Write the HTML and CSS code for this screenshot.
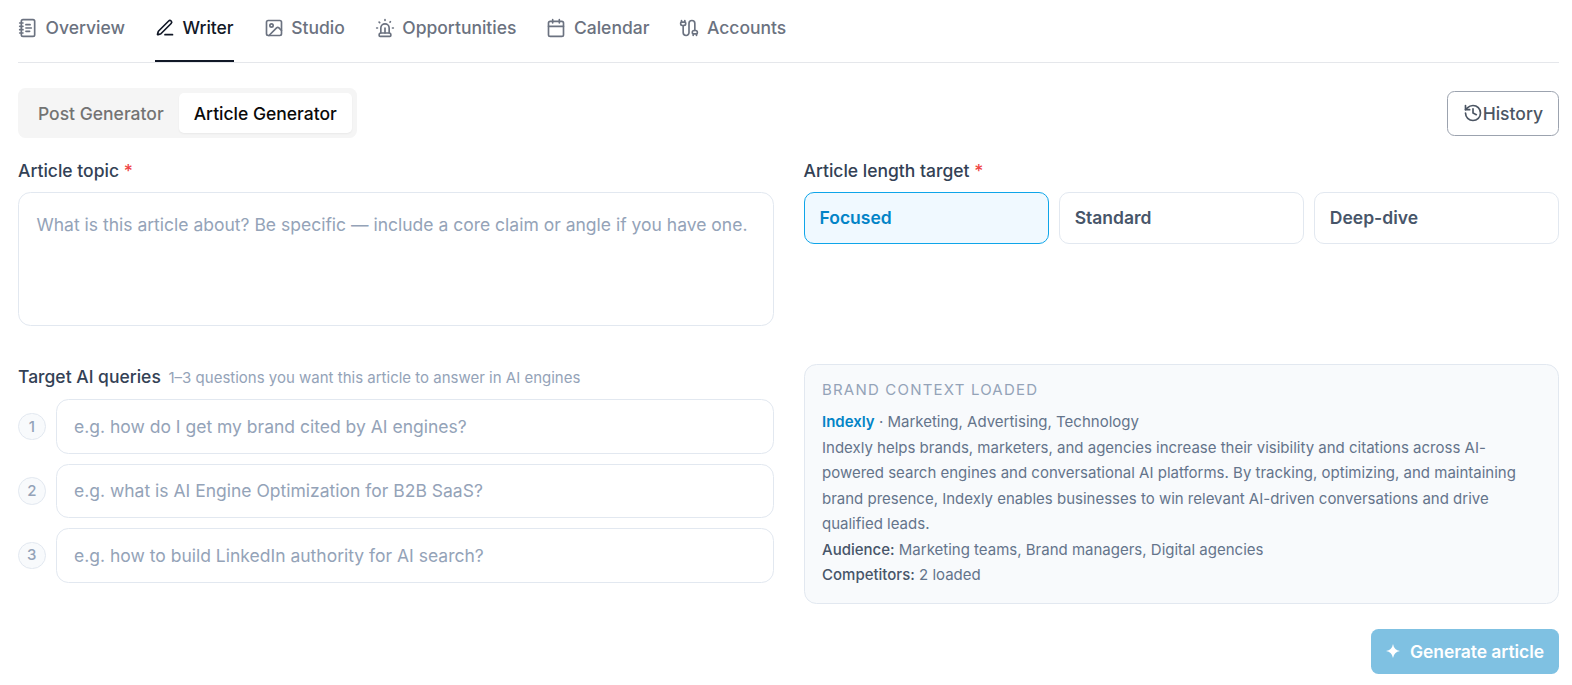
FILE: index.html
```html
<!DOCTYPE html>
<html lang="en">

<head>
    <meta charset="UTF-8">
    <title>Article Generator</title>
    <link rel="stylesheet" href="styles.css">
</head>

<body>
    <!-- Main navigation -->
    <nav class="nav">
        <a class="nav-item">
            <svg class="icon" viewBox="0 0 24 24"><path d="M2 6h4M2 10h4M2 14h4M2 18h4"/><rect width="16" height="20" x="4" y="2" rx="2"/><path d="M9.5 8h5M9.5 12H16M9.5 16H14"/></svg>
            Overview
        </a>
        <a class="nav-item active">
            <svg class="icon" viewBox="0 0 24 24"><path d="M12 20h9"/><path d="M16.376 3.622a1 1 0 0 1 3.002 3.002L7.368 18.635a2 2 0 0 1-.855.506l-2.872.838a.5.5 0 0 1-.62-.62l.838-2.872a2 2 0 0 1 .506-.854z"/></svg>
            Writer
        </a>
        <a class="nav-item">
            <svg class="icon" viewBox="0 0 24 24"><rect width="18" height="18" x="3" y="3" rx="2"/><circle cx="9" cy="9" r="2"/><path d="m21 15-3.086-3.086a2 2 0 0 0-2.828 0L6 21"/></svg>
            Studio
        </a>
        <a class="nav-item">
            <svg class="icon" viewBox="0 0 24 24"><path d="M7 18v-6a5 5 0 1 1 10 0v6"/><path d="M5 21a1 1 0 0 0 1 1h12a1 1 0 0 0 1-1v-1a2 2 0 0 0-2-2H7a2 2 0 0 0-2 2z"/><path d="M21 12h1M18.5 4.5 18 5M2 12h1M12 2v1M4.929 4.929l.707.707M12 12v6"/></svg>
            Opportunities
        </a>
        <a class="nav-item">
            <svg class="icon" viewBox="0 0 24 24"><path d="M8 2v4M16 2v4"/><rect width="18" height="18" x="3" y="4" rx="2"/><path d="M3 10h18"/></svg>
            Calendar
        </a>
        <a class="nav-item">
            <svg class="icon" viewBox="0 0 24 24"><path d="M17 21v-2a1 1 0 0 1-1-1v-1a2 2 0 0 1 2-2h2a2 2 0 0 1 2 2v1a1 1 0 0 1-1 1"/><path d="M19 15V6.5a1 1 0 0 0-7 0v11a1 1 0 0 1-7 0V9"/><path d="M21 21v-2h-4M3 5h4V3"/><path d="M7 5a1 1 0 0 1 1 1v1a2 2 0 0 1-2 2H4a2 2 0 0 1-2-2V6a1 1 0 0 1 1-1V3"/></svg>
            Accounts
        </a>
    </nav>

    <!-- Generator switch and history -->
    <div class="toolbar">
        <div class="switch">
            <button class="switch-button">Post Generator</button>
            <button class="switch-button selected">Article Generator</button>
        </div>
        <button class="history-button">
            <svg class="icon" viewBox="0 0 24 24"><path d="M3 12a9 9 0 1 0 9-9 9.75 9.75 0 0 0-6.74 2.74L3 8"/><path d="M3 3v5h5"/><path d="M12 7v5l4 2"/></svg><span class="button-text">History</span>
        </button>
    </div>

    <!-- Article form -->
    <form class="article-form">
        <div class="topic">
            <label class="label" for="topic">Article topic <span class="required">*</span></label>
            <textarea class="field topic-field" id="topic" placeholder="What is this article about? Be specific — include a core claim or angle if you have one."></textarea>
        </div>

        <div class="length">
            <div class="label">Article length target <span class="required">*</span></div>
            <div class="length-options">
                <button type="button" class="option chosen">Focused</button>
                <button type="button" class="option">Standard</button>
                <button type="button" class="option">Deep-dive</button>
            </div>
        </div>

        <div class="queries">
            <div class="label">Target AI queries <span class="hint">1–3 questions you want this article to answer in AI engines</span></div>
            <div class="query-list">
                <div class="query">
                    <span class="number">1</span>
                    <input type="text" class="field" placeholder="e.g. how do I get my brand cited by AI engines?">
                </div>
                <div class="query">
                    <span class="number">2</span>
                    <input type="text" class="field" placeholder="e.g. what is AI Engine Optimization for B2B SaaS?">
                </div>
                <div class="query">
                    <span class="number">3</span>
                    <input type="text" class="field" placeholder="e.g. how to build LinkedIn authority for AI search?">
                </div>
            </div>
        </div>

        <div class="brand">
            <div class="brand-title">Brand context loaded</div>
            <div><span class="brand-name">Indexly</span> · Marketing, Advertising, Technology</div>
            <div>Indexly helps brands, marketers, and agencies increase their visibility and citations across AI-powered search engines and conversational AI platforms. By tracking, optimizing, and maintaining brand presence, Indexly enables businesses to win relevant AI-driven conversations and drive qualified leads.</div>
            <div><span class="brand-key">Audience:</span> Marketing teams, Brand managers, Digital agencies</div>
            <div><span class="brand-key">Competitors:</span> 2 loaded</div>
        </div>
    </form>

    <div class="actions">
        <button class="generate-button" disabled>
            <svg class="spark" viewBox="0 0 14 14"><path d="M7 0Q8 6 14 7Q8 8 7 14Q6 8 0 7Q6 6 7 0z"/></svg>
            <span class="button-text">Generate article</span>
        </button>
    </div>
</body>

</html>
```
FILE: styles.css
```css
/* General styles */
* {
    box-sizing: border-box;
}

body {
    margin: 0;
    padding: 0 13px 0 18px;
    background-color: #fff;
    color: #334155;
    font-family: Inter, sans-serif;
    font-size: 17.5px;
    line-height: 26px;
}

button,
input,
textarea {
    font: inherit;
}

.icon {
    width: 20px;
    height: 20px;
    flex-shrink: 0;
    fill: none;
    stroke: currentColor;
    stroke-width: 2;
    stroke-linecap: round;
    stroke-linejoin: round;
}

.button-text {
    padding-top: 2px;
}

/* Navigation */
.nav {
    display: flex;
    gap: 30px;
    border-bottom: 1px solid #e5e7eb;
}

.nav-item {
    display: flex;
    align-items: center;
    gap: 7.5px;
    padding: 15px 0 19px;
    border-bottom: 2px solid transparent;
    color: #6b7280;
    font-weight: 500;
}

.nav-item.active {
    border-bottom-color: #111827;
    color: #111827;
}

/* Toolbar */
.toolbar {
    display: flex;
    align-items: center;
    justify-content: space-between;
    margin-top: 25px;
}

.switch {
    display: flex;
    padding: 5px;
    border-radius: 7.5px;
    background-color: #f5f5f5;
}

.switch-button {
    height: 40px;
    padding: 2px 15px 0;
    border: none;
    border-radius: 5px;
    background: none;
    color: #737373;
    font-weight: 500;
}

.switch-button.selected {
    background-color: #fff;
    color: #0a0a0a;
    box-shadow: 0 1px 2px rgba(0, 0, 0, 0.05);
}

.history-button {
    display: flex;
    align-items: center;
    height: 45px;
    padding: 0 15px;
    border: 1px solid #9ca3af;
    border-radius: 7.5px;
    background-color: #fff;
    color: #4b5563;
    font-weight: 500;
}

/* Article form */
.article-form {
    display: grid;
    grid-template-columns: 1fr 1fr;
    column-gap: 30px;
    row-gap: 38px;
    margin-top: 19.5px;
}

.label {
    display: block;
    margin-bottom: 8.5px;
    font-weight: 500;
}

.required {
    color: #ef4444;
}

.hint {
    margin-left: 3px;
    color: #94a3b8;
    font-size: 15px;
    font-weight: 400;
}

.field {
    display: block;
    width: 100%;
    height: 54.4px;
    padding: 0 17.5px;
    border: 1px solid #e2e8f0;
    border-radius: 12.5px;
    background-color: #fff;
    color: #334155;
}

.field::placeholder {
    color: #94a3b8;
    opacity: 1;
}

.topic-field {
    height: 134px;
    padding: 19px 17.5px;
    resize: none;
}

.length-options {
    display: grid;
    grid-template-columns: repeat(3, 1fr);
    gap: 10px;
}

.option {
    height: 52px;
    padding: 0 15px;
    border: 1px solid #e2e8f0;
    border-radius: 10px;
    background-color: #fff;
    color: #475569;
    font-weight: 600;
    text-align: left;
}

.option.chosen {
    border-color: #0ea5e9;
    background-color: #f0f9ff;
    color: #0284c7;
}

/* Target queries */
.queries .label {
    margin-bottom: 8.35px;
}

.query-list {
    display: flex;
    flex-direction: column;
    gap: 10px;
}

.query {
    display: flex;
    align-items: center;
    gap: 10px;
}

.number {
    display: flex;
    align-items: center;
    justify-content: center;
    flex-shrink: 0;
    width: 27.5px;
    height: 27.5px;
    border: 1px solid #e2e8f0;
    border-radius: 50%;
    background-color: #f8fafc;
    color: #94a3b8;
    font-size: 15px;
    font-weight: 500;
}

/* Brand context */
.brand {
    padding: 15px 17.5px;
    border: 1px solid #e2e8f0;
    border-radius: 12.5px;
    background-color: #f8fafc;
    color: #64748b;
    font-size: 15px;
    line-height: 25.5px;
}

.brand-title {
    margin-bottom: 10px;
    color: #94a3b8;
    letter-spacing: 1.2px;
    line-height: 19px;
    text-transform: uppercase;
}

.brand-name {
    color: #0284c7;
    font-weight: 600;
}

.brand-key {
    color: #475569;
    font-weight: 500;
}

/* Actions */
.actions {
    display: flex;
    justify-content: flex-end;
    margin-top: 25px;
}

.generate-button {
    display: flex;
    align-items: center;
    gap: 10px;
    height: 45px;
    padding: 0 15px;
    border: none;
    border-radius: 7.5px;
    background-color: #0284c7;
    color: #fff;
    font-weight: 600;
    letter-spacing: -0.08px;
    opacity: 0.5;
}

.spark {
    width: 14px;
    height: 14px;
    fill: currentColor;
}
```
